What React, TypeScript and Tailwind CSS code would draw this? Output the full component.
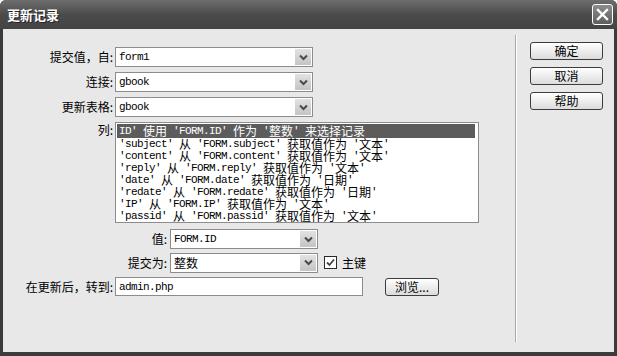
import React from 'react';

const cjk = "font-['Noto_Sans_CJK_SC',sans-serif]";

const Mixed: React.FC<{ text: string }> = ({ text }) => (
  <span className="flex items-center whitespace-pre">
    {(text.match(/[\x00-\x7f]+|[^\x00-\x7f]+/g) || []).map((run, i) =>
      /^[\x00-\x7f]/.test(run) ? (
        <span key={i} className="font-['Liberation_Mono',monospace] text-[11px] tracking-[-0.6px] leading-[12px]">
          {run}
        </span>
      ) : (
        <span key={i} className="font-['Noto_Sans_CJK_SC',sans-serif] text-[12px] leading-[12px]">
          {run}
        </span>
      )
    )}
  </span>
);

const Chevron = () => (
  <svg width="9" height="7" viewBox="0 0 9 7">
    <path d="M1 1.5 L4.5 5 L8 1.5" fill="none" stroke="#4a4a4a" strokeWidth="2" />
  </svg>
);

const Select: React.FC<{ value: string; className: string }> = ({ value, className }) => (
  <div className={`${className} h-[20px] border border-[#8c8c8c] bg-white flex items-center pl-[3px] pr-[1px]`}>
    <div className="flex-1 flex items-center text-black">
      <Mixed text={value} />
    </div>
    <div className="w-[16px] h-[16px] bg-gradient-to-b from-[#e2e2e2] to-[#c4c4c4] flex items-center justify-center">
      <Chevron />
    </div>
  </div>
);

const Button: React.FC<{ label: string; className: string }> = ({ label, className }) => (
  <div
    className={`${className} border border-[#3c3c3c] rounded-[3px] bg-gradient-to-b from-white to-[#dcdcdc] flex items-center justify-center text-[12px] leading-[12px] text-black ${cjk}`}
  >
    {label}
  </div>
);

const rows = [
  "ID' 使用 'FORM.ID' 作为 '整数' 来选择记录",
  "'subject' 从 'FORM.subject' 获取值作为 '文本'",
  "'content' 从 'FORM.content' 获取值作为 '文本'",
  "'reply' 从 'FORM.reply' 获取值作为 '文本'",
  "'date' 从 'FORM.date' 获取值作为 '日期'",
  "'redate' 从 'FORM.redate' 获取值作为 '日期'",
  "'IP' 从 'FORM.IP' 获取值作为 '文本'",
  "'passid' 从 'FORM.passid' 获取值作为 '文本'",
];

const Label: React.FC<{ text: string; className: string }> = ({ text, className }) => (
  <div className={`${className} text-right text-[12px] leading-[14px] text-black whitespace-pre ${cjk}`}>{text}</div>
);

export default function App() {
  return (
    <div className="w-[617px] h-[356px] flex flex-col bg-[#3b3b3b] rounded-t-[6px] overflow-hidden">
      {/* title bar */}
      <div className="h-[29px] flex items-center justify-between pl-[7px] pr-[4px] bg-gradient-to-b from-[#6e6e6e] via-[#4b4b4b] to-[#444444]">
        <span className={`text-white text-[13px] font-bold ${cjk} [text-shadow:1px_1px_0_#222]`}>更新记录</span>
        <div className="w-[21px] h-[21px] rounded-[3px] border border-white bg-gradient-to-b from-[#8c8c8c] to-[#5e5e5e] flex items-center justify-center">
          <svg width="13" height="13" viewBox="0 0 13 13">
            <path d="M2 2 L11 11 M11 2 L2 11" stroke="white" strokeWidth="2.4" strokeLinecap="square" />
          </svg>
        </div>
      </div>

      {/* body */}
      <div className="flex-1 mx-[3px] mb-[4px] bg-[#e8e8e8] flex">
        <div className="w-[512px] pt-[18px] flex flex-col">
          <div className="flex items-center gap-[2px] h-[20px]">
            <Label text="提交值，自:" className="w-[110px]" />
            <Select value="form1" className="w-[198px]" />
          </div>
          <div className="flex items-center gap-[2px] h-[20px] mt-[5px]">
            <Label text="连接:" className="w-[110px]" />
            <Select value="gbook" className="w-[198px]" />
          </div>
          <div className="flex items-center gap-[2px] h-[20px] mt-[5px]">
            <Label text="更新表格:" className="w-[110px]" />
            <Select value="gbook" className="w-[198px]" />
          </div>

          <div className="flex items-start gap-[2px] mt-[5px]">
            <Label text="列:" className="w-[110px] pt-[1px]" />
            <div className="w-[364px] h-[101px] border border-[#8c8c8c] bg-white p-[1px] overflow-hidden">
              {rows.map((r, i) => (
                <div
                  key={i}
                  className={
                    i === 0
                      ? 'h-[14px] flex items-center bg-[#5c5c5c] text-white pl-[2px] mr-[2px]'
                      : 'h-[12px] flex items-center text-black pl-[2px]'
                  }
                >
                  <Mixed text={r} />
                </div>
              ))}
            </div>
          </div>

          <div className="flex items-center gap-[3px] h-[20px] mt-[6px]">
            <Label text="值:" className="w-[164px]" />
            <Select value="FORM.ID" className="w-[148px]" />
          </div>
          <div className="flex items-center gap-[3px] h-[21px] mt-[3px]">
            <Label text="提交为:" className="w-[164px]" />
            <Select value="整数" className="w-[148px]" />
            <div className="ml-[3px] w-[13px] h-[13px] border border-[#2a2a2a] bg-white flex items-center justify-center">
              <svg width="9" height="9" viewBox="0 0 9 9">
                <path d="M1 4.5 L3.5 7 L8 1.5" fill="none" stroke="#444" strokeWidth="1.8" />
              </svg>
            </div>
            <span className={`ml-[2px] text-[12px] text-black ${cjk}`}>主键</span>
          </div>
          <div className="flex items-center gap-[2px] h-[19px] mt-[4px]">
            <Label text="在更新后，转到:" className="w-[110px]" />
            <div className="w-[248px] h-[19px] border border-[#8c8c8c] bg-white pl-[3px] flex items-center">
              <Mixed text="admin.php" />
            </div>
            <Button label="浏览..." className="ml-[20px] w-[54px] h-[18px]" />
          </div>
        </div>

        {/* separator */}
        <div className="mt-[6px] mb-[10px] border-l border-[#a8a8a8] border-r-white w-[2px] border-r" />

        <div className="flex-1 pl-[13px] pt-[13px] flex flex-col gap-[7px]">
          <Button label="确定" className="w-[73px] h-[18px]" />
          <Button label="取消" className="w-[73px] h-[18px]" />
          <Button label="帮助" className="w-[73px] h-[18px]" />
        </div>
      </div>
    </div>
  );
}
